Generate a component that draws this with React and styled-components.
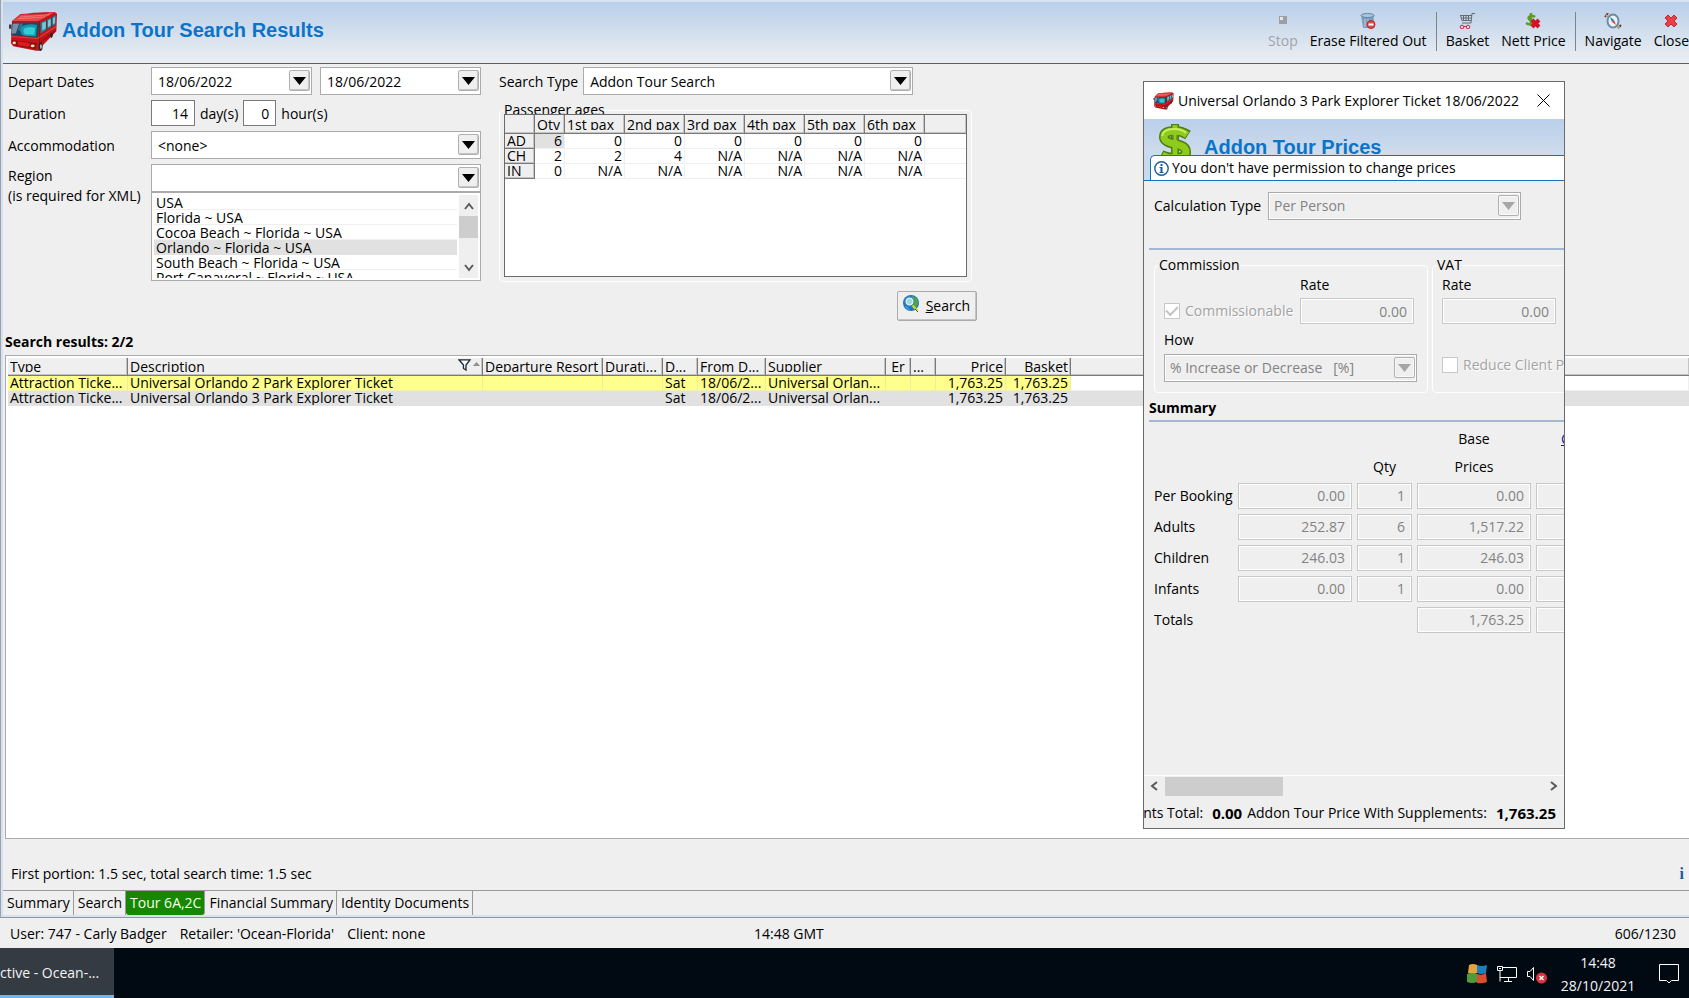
import styled, { createGlobalStyle } from 'styled-components'

const GlobalStyle = createGlobalStyle`
    * {
        box-sizing: border-box;
    }
    body {
        margin: 0;
        background: #efefef;
        color: #000000;
        font-family: 'Open Sans', 'Noto Sans', sans-serif;
        font-size: 14px;
        line-height: 20px;
    }
    button, input, select {
        font: inherit;
        color: inherit;
        margin: 0;
        border-radius: 0;
    }
`

const Desktop = styled.div`
    position: relative;
    display: flex;
    flex-direction: column;
    min-height: 100vh;
    overflow: hidden;
    white-space: nowrap;
`

const Frame = styled.main`
    flex: 1;
    display: flex;
    flex-direction: column;
    border-left: 1px solid #9aa3ad;
    border-bottom: 1px solid #8f979f;
    box-shadow: inset 2px 2px 0 #d6e2f0, inset 0 -2px 0 #d6e2f0;
    padding: 2px 0 2px 2px;
    overflow: hidden;
`

/* ---------- header ---------- */

const Header = styled.header`
    display: flex;
    align-items: center;
    height: 62px;
    padding: 0 0 2px 5px;
    background: linear-gradient(#b9cfea, #eceff1);
    border-bottom: 1px solid #1a70a8;
    overflow: hidden;
    h1 {
        flex: 1;
        margin: 0 0 0 4px;
        padding-bottom: 4px;
    }
`

const Title = styled.h1`
    color: #0b74c9;
    font-family: 'Liberation Sans', Arial, sans-serif;
    font-size: 20px;
    line-height: 24px;
    font-weight: bold;
`

const Toolbar = styled.div`
    display: flex;
    flex: none;
    align-items: center;
    margin-right: -6px;
`

const ToolButton = styled.button`
    display: flex;
    flex-direction: column;
    align-items: center;
    gap: 2px;
    padding: 0 6px;
    border: 0;
    background: none;
    &:disabled {
        color: #a0a4aa;
    }
`

const Separator = styled.span`
    width: 1px;
    height: 39px;
    margin: 0 3px;
    background: #7c848e;
`

/* ---------- form controls ---------- */

const Field = styled.span`
    position: relative;
    display: flex;
    height: 28px;
    width: ${(props) => props.$width || '100%'};
    flex: none;
    border: 1px solid #ababab;
    background: #ffffff;
    input, select {
        flex: 1;
        min-width: 0;
        width: 100%;
        padding: 2px 28px 0 6px;
        border: 0;
        background: none;
        appearance: none;
        outline: 0;
        opacity: 1;
    }
    select:disabled {
        background: #efefef;
        border: 1px solid #ffffff;
        color: #838383;
        padding: 0 28px 0 4px;
    }
`

const Arrow = styled.span`
    position: absolute;
    top: 2px;
    right: 1px;
    display: grid;
    place-items: center;
    width: 21px;
    height: 21px;
    border: 1px solid #b0b0b0;
    border-radius: 2px;
    background: #efefef;
    color: ${(props) => (props.$off ? '#a6a6a6' : '#000000')};
    box-shadow: ${(props) => (props.$off ? 'inset 0 0 0 1px #f8f8f8' : 'inset -1px -1px 0 #c4c4c4')};
    pointer-events: none;
`

const NumberBox = styled.input`
    width: ${(props) => props.$width || '100%'};
    height: 26px;
    padding: 0 6px;
    border: 1px solid #7a7a7a;
    background: #ffffff;
    text-align: right;
    &:disabled {
        border-color: #c8c8c8;
        background: #efefef;
        box-shadow: inset 0 0 0 1px #ffffff;
        color: #838383;
    }
`

const Form = styled.section`
    display: flex;
    gap: 18px;
    padding: 3px 0 0 5px;
    label {
        padding-top: 2px;
    }
`

const Criteria = styled.div`
    display: grid;
    grid-template-columns: 143px 330px;
    row-gap: 5px;
    align-content: start;
    align-items: center;
`

const Inline = styled.div`
    display: flex;
    align-items: center;
    gap: ${(props) => props.$gap || '5px'};
`

const RegionLabel = styled.label`
    align-self: start;
`

const ListBox = styled.div`
    display: flex;
    height: 89px;
    padding: 2px;
    border: 1px solid #ababab;
    background: #ffffff;
    ul {
        flex: 1;
        height: 83px;
        margin: 0;
        padding: 0;
        list-style: none;
        overflow: hidden;
    }
    li {
        height: 15px;
        margin-right: 2px;
        padding-left: 2px;
        line-height: 16px;
        border-bottom: 1px solid #efefef;
    }
    li[aria-selected='true'] {
        background: #e1e1e1;
        border-color: #e1e1e1;
    }
`

const ScrollColumn = styled.div`
    display: flex;
    flex-direction: column;
    width: 19px;
    background: #efefef;
    svg {
        flex: none;
        margin: auto;
    }
    i {
        height: 22px;
        background: #cdcdcd;
    }
    span {
        display: flex;
        height: 21px;
    }
    span:last-child {
        margin-top: auto;
    }
`

const SearchSide = styled.div`
    display: flex;
    flex-direction: column;
    width: 478px;
`

const Passengers = styled.fieldset`
    width: 473px;
    margin: 5px 0 0;
    padding: 0 4px 4px;
    border: 1px solid #ffffff;
    border-radius: 4px;
    legend {
        padding: 0;
        line-height: 20px;
    }
`

const PaxGrid = styled.div`
    position: relative;
    height: 163px;
    margin-top: -6px;
    border: 1px solid #6a6a6a;
    background: #ffffff;
    table {
        width: 100%;
        table-layout: fixed;
        border-collapse: separate;
        border-spacing: 0;
    }
    th, td {
        height: 15px;
        padding: 0 2px;
        font-weight: normal;
        line-height: 14px;
        text-align: right;
        border-right: 1px solid #efefef;
        border-bottom: 1px solid #efefef;
        overflow: hidden;
    }
    th {
        background: #efefef;
        text-align: left;
        border-color: #7a7a7a;
        box-shadow: inset -1px -1px 0 #c4c4c4;
    }
    thead th {
        height: 19px;
        padding: 2px 2px 3px;
    }
    tbody tr:first-child td:nth-child(2) {
        background: #e1e1e1;
    }
    td:last-child, th:last-child {
        border-right: 0;
    }
`

// Texte d'en-tête coupé juste sous la ligne de base
const HeadText = styled.span`
    display: block;
    height: 13px;
    line-height: 15px;
    overflow: hidden;
`

const SearchButton = styled.button`
    display: flex;
    align-items: center;
    align-self: flex-end;
    gap: 6px;
    height: 30px;
    margin-top: 9px;
    padding: 0 6px 0 5px;
    border: 1px solid #ababab;
    border-radius: 2px;
    background: #efefef;
    box-shadow: inset -1px -1px 0 #c4c4c4;
    svg {
        margin-bottom: 5px;
    }
`

/* ---------- results ---------- */

const ResultsTitle = styled.h2`
    margin: 11px 0 3px 2px;
    font-size: 14px;
    line-height: 20px;
    font-weight: bold;
`

const Results = styled.section`
    flex: 1;
    margin-left: 2px;
    padding: 2px 0 0 2px;
    border: 1px solid #ababab;
    border-right: 0;
    background: #ffffff;
    table {
        width: 100%;
        table-layout: fixed;
        border-collapse: separate;
        border-spacing: 0;
    }
    th, td {
        padding: 0 2px;
        font-weight: normal;
        text-align: left;
        overflow: hidden;
    }
    th {
        height: 18px;
        padding: 1px 2px 3px;
        background: #efefef;
        border-right: 1px solid #7a7a7a;
        border-bottom: 1px solid #7a7a7a;
        box-shadow: inset -1px -1px 0 #c4c4c4;
    }
    td {
        height: 15px;
        line-height: 14px;
        border-right: 1px solid #efef9a;
        border-bottom: 1px solid #efefc0;
        background: #ffff8c;
    }
    tr[aria-selected='true'] td {
        background: #e1e1e1;
        border-color: #e1e1e1;
    }
    tr[aria-selected='false'] td:last-child {
        background: #ffffff;
        border-color: #efefef;
    }
    th:last-child {
        border-right: 0;
    }
    .right {
        text-align: right;
    }
    .center {
        text-align: center;
    }
    .sorted {
        display: flex;
        justify-content: space-between;
        align-items: flex-start;
    }
`

const Timing = styled.footer`
    display: flex;
    justify-content: space-between;
    padding: 25px 5px 6px 8px;
    b {
        color: #1b5c9e;
        font-family: 'Liberation Serif', serif;
        font-size: 16px;
    }
`

const Tabs = styled.nav`
    display: flex;
    height: 25px;
    border-top: 1px solid #9a9a9a;
`

const Tab = styled.button`
    padding: 0 3px 0 4px;
    border: 0;
    border-right: 1px solid #9a9a9a;
    background: ${(props) => (props.$active ? '#178700' : 'none')};
    color: ${(props) => (props.$active ? '#f2fff0' : '#000000')};
    border-radius: ${(props) => (props.$active ? '0 0 3px 3px' : '0')};
`

const StatusBar = styled.div`
    display: grid;
    grid-template-columns: 754px 1fr auto;
    align-items: center;
    height: 30px;
    padding: 2px 13px 0 0;
    span {
        padding-left: 10px;
    }
`

/* ---------- taskbar ---------- */

const Taskbar = styled.div`
    display: flex;
    justify-content: space-between;
    height: 50px;
    background: #010912;
    color: #f4f4f4;
`

const Task = styled.button`
    width: 114px;
    padding: 2px 0 0;
    border: 0;
    border-bottom: 3px solid #76b4e6;
    background: #343b43;
    text-align: left;
    overflow: hidden;
`

const Tray = styled.div`
    display: flex;
    align-items: center;
    gap: 10px;
    padding: 1px 10px 0 0;
    time {
        width: 78px;
        margin: 0 12px 0 2px;
        text-align: center;
        line-height: 23px;
    }
`

/* ---------- price dialog ---------- */

const Dialog = styled.section`
    position: absolute;
    top: 81px;
    right: 124px;
    bottom: 169px;
    width: 422px;
    display: flex;
    flex-direction: column;
    border: 1px solid #6a6a6a;
    background: #efefef;
    overflow: hidden;
`

const DialogTitle = styled.div`
    display: flex;
    flex: none;
    align-items: center;
    gap: 4px;
    height: 37px;
    padding: 0 14px 0 9px;
    background: #ffffff;
    button {
        display: flex;
        margin-left: auto;
        padding: 0;
        border: 0;
        background: none;
    }
`

const DialogHeader = styled.div`
    display: flex;
    flex: none;
    gap: 11px;
    height: 36px;
    padding: 4px 0 0 13px;
    background: linear-gradient(#b9cfea, #cfdcec);
    overflow: hidden;
    svg {
        flex: none;
    }
    h2 {
        margin: 12px 0 0;
    }
`

const Notice = styled.div`
    flex: none;
    padding-left: 6px;
    border-bottom: 1px solid #1a70b8;
    background: #c8daee;
    p {
        display: flex;
        align-items: center;
        gap: 3px;
        height: 25px;
        margin: 0;
        padding-left: 3px;
        border: solid #1a70b8;
        border-width: 1px 0 0 1px;
        border-top-left-radius: 5px;
        background: #ffffff;
    }
`

const DialogBody = styled.div`
    flex: 1;
    padding: 6px 0 0 5px;
    overflow: hidden;
`

const Calculation = styled.div`
    display: flex;
    align-items: center;
    gap: 7px;
    padding: 5px 0 28px 5px;
`

const Rule = styled.hr`
    height: 2px;
    margin: 0;
    border: 0;
    background: #a3b8d0;
`

const Groups = styled.div`
    display: flex;
    gap: 4px;
    padding: 5px 0 0 5px;
`

const Group = styled.fieldset`
    flex: none;
    width: ${(props) => props.$width};
    height: 138px;
    min-width: 0;
    margin: 0;
    padding: 0 0 0 9px;
    border: 1px solid #ffffff;
    border-radius: 4px;
    legend {
        margin-left: -5px;
        padding: 0;
        line-height: 20px;
    }
`

const RateLabel = styled.label`
    display: block;
    margin: 0 0 4px ${(props) => props.$indent || '0'};
    line-height: 19px;
`

const Check = styled.label`
    display: flex;
    align-items: center;
    gap: 5px;
    width: ${(props) => props.$width || 'auto'};
    color: #a3a3a3;
    text-shadow: 1px 1px 0 #ffffff;
    input {
        display: grid;
        flex: none;
        place-items: center;
        width: 16px;
        height: 16px;
        border: 1px solid #c8c8c8;
        background: #ffffff;
        appearance: none;
    }
    input:checked::after {
        content: '';
        width: 10px;
        height: 5px;
        margin-bottom: 4px;
        border: solid #c4c4c4;
        border-width: 0 0 2px 2px;
        transform: rotate(-45deg);
    }
`

const HowLabel = styled.label`
    display: block;
    margin: 6px 0 4px;
`

const VatCheck = styled.div`
    margin-top: 31px;
`

const SummaryTitle = styled.h3`
    margin: 5px 0 2px;
    font-size: 14px;
    line-height: 20px;
`

const Summary = styled.table`
    width: 501px;
    margin-left: 5px;
    table-layout: fixed;
    border-collapse: collapse;
    th {
        padding: 0;
        font-weight: normal;
        text-align: left;
    }
    td {
        height: 31px;
        padding: 0 5px 0 0;
    }
    thead th {
        height: 27px;
        padding-right: 5px;
        text-align: center;
    }
    thead tr:first-child th {
        height: 31px;
        padding-top: 3px;
    }
    input {
        display: block;
    }
    .linked {
        padding-left: 25px;
        text-align: left;
    }
    a {
        color: #1a1a8c;
    }
`

const ScrollRow = styled.div`
    display: flex;
    flex: none;
    align-items: center;
    height: 21px;
    padding: 0 6px;
    border-top: 1px solid #ffffff;
    i {
        width: 118px;
        height: 19px;
        margin: 0 auto 0 7px;
        background: #cdcdcd;
    }
`

const Totals = styled.div`
    display: flex;
    flex: none;
    justify-content: flex-end;
    height: 32px;
    padding: 7px 8px 0 0;
    overflow: hidden;
    b {
        margin: 0 5px 0 9px;
        font-size: 15px;
    }
    b:last-child {
        margin-right: 0;
    }
`

/* ---------- icons ---------- */

const Bus = ({ width, height }) => (
    <svg width={width} height={height} viewBox="24 32 152 122" preserveAspectRatio="none" aria-hidden="true">
        <path d="M36 62L62 41L166 35L173 40L171 92L158 106L130 134L122 150L110 150L40 137L33 128Z" fill="#c4141a" />
        <path d="M37 62L63 43L166 36L120 60L110 62Z" fill="#e5494a" />
        <path d="M78 43L100 37L150 36L140 42Z" fill="#b81f28" />
        <path d="M62 50L150 43M56 55L135 50" stroke="#f28880" strokeWidth="2" />
        <path d="M37 67L118 66L113 110L34 104Z" fill="#174a66" />
        <path d="M64 78Q88 68 112 74L109 108L72 106Q56 98 64 78Z" fill="#1496ab" />
        <path d="M72 84Q90 76 106 82L104 103L78 102Q68 96 72 84Z" fill="#34cbd2" />
        <path d="M38 70L58 69L48 98L36 100Z" fill="#7690a6" />
        <path d="M60 69L70 69L60 90L54 90Z" fill="#3d6f90" />
        <path d="M123 66L170 45L168 72L123 99Z" fill="#1f7f96" />
        <path d="M128 68L139 63V84L128 90ZM145 60L154 56V76L145 80ZM160 53L167 50V68L160 72Z" fill="#74cbd6" />
        <path d="M120 62V146M142 58V88M157 50V80" stroke="#86141c" strokeWidth="3" />
        <path d="M34 108L113 114L170 78" fill="none" stroke="#e0423f" strokeWidth="3" />
        <path d="M36 118L112 127L108 146L40 134Z" fill="#8f0c12" />
        <path d="M54 122L90 127V139L54 134Z" fill="#dd1b1f" />
        <path d="M124 120L168 88V94L124 128Z" fill="#a31016" />
        <ellipse cx="43" cy="127" rx="5" ry="4" fill="#ffe3b0" />
        <ellipse cx="99" cy="136" rx="6" ry="4" fill="#ffe3b0" />
        <ellipse cx="123" cy="138" rx="6" ry="13" fill="#26262a" />
        <ellipse cx="124" cy="138" rx="3" ry="7" fill="#b9b9bd" />
        <ellipse cx="156" cy="104" rx="4" ry="8" fill="#26262a" />
        <path d="M27 72h8v13h-8zM117 76h5v14h-5z" fill="#3b3f4a" />
    </svg>
)

const Dollar = () => (
    <svg width="36" height="40" viewBox="0 0 36 40" fill="none" aria-hidden="true">
        <g stroke="#4e7d12" strokeWidth="10" strokeLinejoin="round">
            <path d="M31 12Q25 8 18 8Q7 8 7 14Q7 19 18 21Q29 23 29 29Q29 35 18 35Q10 35 4 32" />
            <path d="M18 1v38" strokeWidth="8" />
        </g>
        <g stroke="#8fcb1c" strokeWidth="7">
            <path d="M30 12Q25 8 18 8Q7 8 7 14Q7 19 18 21Q29 23 29 29Q29 35 18 35Q10 35 5 32" />
            <path d="M18 2v37" strokeWidth="5" />
        </g>
        <path d="M5 13Q6 6 17 6Q25 6 29 10" stroke="#c8ec62" strokeWidth="2" />
        <path d="M16 12v5M20 12v5" stroke="#4e7d12" />
    </svg>
)

const StopIcon = () => (
    <svg width="16" height="16" viewBox="0 0 16 16" aria-hidden="true">
        <path d="M4 3h8v8H4z" fill="#9b9ea3" />
        <path d="M5 4h3v3H5z" fill="#e3e6ea" />
    </svg>
)

const EraseIcon = () => (
    <svg width="16" height="16" viewBox="0 0 16 16" aria-hidden="true">
        <path d="M1 2h13l-1 13H3z" fill="#7d9fbd" />
        <ellipse cx="7.500" cy="2.500" rx="6.500" ry="2" fill="#a9c6dc" stroke="#5f87a8" />
        <path d="M5 6v8M8 6v8" stroke="#b7cddd" />
        <circle cx="11" cy="11.500" r="4" fill="#e04a4a" stroke="#b52525" />
        <path d="M8.500 11.500h5" stroke="#ffffff" strokeWidth="2" />
    </svg>
)

const BasketIcon = () => (
    <svg width="16" height="16" viewBox="0 0 16 16" fill="none" aria-hidden="true">
        <path d="M16 .5h-3L12 10H3M1 2.500h12M1.500 2.500L3 7.500h9M4.500 3v4M7 3v4M9.500 3v4M2 5h10" stroke="#666b72" />
        <circle cx="3" cy="14" r="1.800" stroke="#d12b38" />
        <circle cx="9" cy="14" r="1.800" stroke="#d12b38" />
        <path d="M5 13.500h2.500" stroke="#d12b38" />
    </svg>
)

const NettIcon = () => (
    <svg width="16" height="16" viewBox="0 0 16 16" fill="none" aria-hidden="true">
        <path d="M10 4Q8 2 5 3Q2 5 5 7L8 8Q10 10 7 11Q4 12 1 10M6 0v13" stroke="#5c9c22" strokeWidth="2.500" />
        <path d="M7 7l7 7M14 7l-7 7" stroke="#d80f24" strokeWidth="4" />
    </svg>
)

const CompassIcon = () => (
    <svg width="18" height="16" viewBox="0 0 18 16" fill="none" aria-hidden="true">
        <path d="M1 4l3-4M14 15l3-3" stroke="#5a4636" strokeWidth="2" />
        <path d="M2 2l4 3M12 12l4 3" stroke="#d0a070" strokeWidth="2" />
        <ellipse cx="9" cy="8" rx="5.500" ry="6.500" fill="#e8f4fb" stroke="#6e8ba3" strokeWidth="2" />
        <path d="M6 4l4 3-2 2z" fill="#1479c9" />
        <path d="M12 12l-4-3 2-2z" fill="#e0402e" />
    </svg>
)

const CloseIcon = () => (
    <svg width="16" height="16" viewBox="0 0 16 16" aria-hidden="true">
        <path
            d="M2 5l3-3 3 3 3-3 3 3-3 3 3 3-3 3-3-3-3 3-3-3 3-3z"
            fill="#ea3f49"
            stroke="#bc2a35"
        />
    </svg>
)

const GlobeIcon = () => (
    <svg width="17" height="17" viewBox="0 0 17 17" fill="none" aria-hidden="true">
        <circle cx="8" cy="8" r="8" fill="#2273c4" />
        <path d="M9 1q7 2 6 8l-4 6-3-5z" fill="#4fa83d" />
        <path d="M2 11q3 0 5 4-4 0-5-4z" fill="#38a0d8" />
        <circle cx="6.500" cy="6.500" r="3.500" fill="#9fd8ea" stroke="#d8eef7" strokeWidth="1.500" />
        <circle cx="6.500" cy="6.500" r="4.700" stroke="#3f86b5" />
        <path d="M9.500 10.500l5 5" stroke="#d8d23a" strokeWidth="2" />
        <path d="M12 14l3 3" stroke="#51521f" />
    </svg>
)

const InfoIcon = () => (
    <svg width="15" height="15" viewBox="0 0 15 15" fill="none" aria-hidden="true">
        <circle cx="7.500" cy="7.500" r="6.700" stroke="#1b5c9e" strokeWidth="1.400" />
        <path d="M6.500 3h2v2h-2zM5.500 6h3v5h1v1h-4v-1h1V7h-1z" fill="#1b5c9e" />
    </svg>
)

const Chevron = ({ d, width, height }) => (
    <svg width={width} height={height} viewBox={`0 0 ${width} ${height}`} fill="none" aria-hidden="true">
        <path d={d} stroke="#5a5a5a" strokeWidth="2" />
    </svg>
)

const Triangle = () => (
    <svg width="13" height="8" viewBox="0 0 13 8" aria-hidden="true">
        <path d="M0 0h13L6.500 8z" fill="currentColor" />
    </svg>
)

const FilterIcon = () => (
    <svg width="22" height="12" viewBox="0 0 22 12" aria-hidden="true">
        <path d="M1 .8h11L8 6v5L5.500 9.500V6z" fill="#ffffff" stroke="#1d2430" strokeWidth="1.300" />
        <path d="M15 7l3.500-4L22 7z" fill="#8d8d8d" />
    </svg>
)

const ShieldIcon = () => (
    <svg width="20" height="20" viewBox="0 0 20 20" aria-hidden="true">
        <path d="M2 1q4-2 8 0v8q-4 2-9 0z" fill="#e8a23a" />
        <path d="M10 1q5 2 10 0l-1 8q-5 2-9 0z" fill="#1f7fb8" />
        <path d="M0 10q5-2 10 0v8q-5 2-10 0z" fill="#4f9a3c" />
        <path d="M10 10q5 2 9-1l1 9q-5 2-10 1z" fill="#d8502c" />
    </svg>
)

const NetworkIcon = () => (
    <svg width="20" height="18" viewBox="0 0 20 18" fill="none" stroke="#ffffff" aria-hidden="true">
        <path d="M6 2.500h13.500v10H3M11.500 13v3M7 16.500h8M.5 1.500h5v4h-5zM3 5.500v11M2 3.500h2" />
    </svg>
)

const MutedIcon = () => (
    <svg width="20" height="20" viewBox="0 0 20 20" fill="none" aria-hidden="true">
        <path d="M.5 7.500h2.500L6.500 3.500v13L3 12.500H.5z" stroke="#ffffff" />
        <circle cx="14.500" cy="14" r="5.500" fill="#d8323c" />
        <path d="M12.500 12l4 4M16.500 12l-4 4" stroke="#ffffff" strokeWidth="1.500" />
    </svg>
)

const NoteIcon = () => (
    <svg width="20" height="20" viewBox="0 0 20 20" fill="none" stroke="#ffffff" aria-hidden="true">
        <path d="M.5.5h19v16h-7l-2.500 2.500-2.500-2.500h-7z" />
    </svg>
)

/* ---------- data ---------- */

const regions = [
    'USA',
    'Florida ~ USA',
    'Cocoa Beach ~ Florida ~ USA',
    'Orlando ~ Florida ~ USA',
    'South Beach ~ Florida ~ USA',
    'Port Canaveral ~ Florida ~ USA',
]

const paxHead = ['', 'Qty', '1st pax', '2nd pax', '3rd pax', '4th pax', '5th pax', '6th pax', '']
const paxWidths = [30, 30, 60, 60, 60, 60, 60, 60]
const paxRows = [
    ['AD', '6', '0', '0', '0', '0', '0', '0'],
    ['CH', '2', '2', '4', 'N/A', 'N/A', 'N/A', 'N/A'],
    ['IN', '0', 'N/A', 'N/A', 'N/A', 'N/A', 'N/A', 'N/A'],
]

const columns = [
    { name: 'Type', width: 120 },
    { name: 'Description', width: 355, align: 'sorted' },
    { name: 'Departure Resort', width: 120 },
    { name: 'Durati...', width: 60 },
    { name: 'D...', width: 35 },
    { name: 'From D...', width: 68 },
    { name: 'Supplier', width: 120 },
    { name: 'Er', width: 25, align: 'center' },
    { name: '...', width: 25 },
    { name: 'Price', width: 70, align: 'right' },
    { name: 'Basket', width: 65, align: 'right' },
]

const tours = [2, 3].map((parks) => [
    'Attraction Ticke...',
    `Universal Orlando ${parks} Park Explorer Ticket`,
    '',
    '',
    'Sat',
    '18/06/2...',
    'Universal Orlan...',
    '',
    '',
    '1,763.25',
    '1,763.25',
])

const prices = [
    { name: 'Per Booking', price: '0.00', qty: '1', base: '0.00' },
    { name: 'Adults', price: '252.87', qty: '6', base: '1,517.22' },
    { name: 'Children', price: '246.03', qty: '1', base: '246.03' },
    { name: 'Infants', price: '0.00', qty: '1', base: '0.00' },
    { name: 'Totals', base: '1,763.25' },
]

/* ---------- components ---------- */

function Combo({ id, value, width, disabled, label, date }) {
    return (
        <Field $width={width}>
            {date ? (
                <input id={id} aria-label={label} defaultValue={value} />
            ) : (
                <select id={id} aria-label={label} disabled={disabled}>
                    <option>{value}</option>
                </select>
            )}
            <Arrow $off={disabled}>
                <Triangle />
            </Arrow>
        </Field>
    )
}

function Tool({ icon, name, disabled }) {
    return (
        <ToolButton disabled={disabled}>
            {icon}
            {name}
        </ToolButton>
    )
}

function SearchForm() {
    return (
        <Form>
            <Criteria>
                <label htmlFor="from">Depart Dates</label>
                <Inline $gap="8px">
                    <Combo id="from" value="18/06/2022" width="161px" date />
                    <Combo label="Depart to" value="18/06/2022" width="161px" date />
                </Inline>
                <label htmlFor="days">Duration</label>
                <Inline>
                    <NumberBox id="days" $width="44px" defaultValue="14" />
                    <label htmlFor="days">day(s)</label>
                    <NumberBox id="hours" $width="33px" defaultValue="0" />
                    <label htmlFor="hours">hour(s)</label>
                </Inline>
                <label htmlFor="accommodation">Accommodation</label>
                <Combo id="accommodation" value="<none>" />
                <RegionLabel htmlFor="region">
                    Region
                    <br />
                    (is required for XML)
                </RegionLabel>
                <div>
                    <Combo id="region" value="" />
                    <ListBox>
                        <ul role="listbox" aria-label="Regions">
                            {regions.map((region) => (
                                <li key={region} role="option" aria-selected={region.startsWith('Orlando')}>
                                    {region}
                                </li>
                            ))}
                        </ul>
                        <ScrollColumn>
                            <span><Chevron d="M1 7l4-5 4 5" width={10} height={8} /></span>
                            <i />
                            <span><Chevron d="M1 1l4 5 4-5" width={10} height={8} /></span>
                        </ScrollColumn>
                    </ListBox>
                </div>
            </Criteria>
            <SearchSide>
                <Inline>
                    <label htmlFor="searchType">Search Type</label>
                    <Combo id="searchType" value="Addon Tour Search" width="330px" />
                </Inline>
                <Passengers>
                    <legend>Passenger ages</legend>
                    <PaxGrid>
                        <table>
                            <colgroup>
                                {paxWidths.map((width, i) => <col key={i} width={width} />)}
                                <col />
                            </colgroup>
                            <thead>
                                <tr>
                                    {paxHead.map((name, i) => (
                                        <th key={i}><HeadText>{name}</HeadText></th>
                                    ))}
                                </tr>
                            </thead>
                            <tbody>
                                {paxRows.map(([name, ...cells]) => (
                                    <tr key={name}>
                                        <th>{name}</th>
                                        {cells.map((cell, i) => <td key={i}>{cell}</td>)}
                                        <td />
                                    </tr>
                                ))}
                            </tbody>
                        </table>
                    </PaxGrid>
                </Passengers>
                <SearchButton>
                    <GlobeIcon />
                    <span><u>S</u>earch</span>
                </SearchButton>
            </SearchSide>
        </Form>
    )
}

function ResultsTable() {
    return (
        <Results>
            <table>
                <colgroup>
                    {columns.map((column) => <col key={column.name} width={column.width} />)}
                    <col />
                </colgroup>
                <thead>
                    <tr>
                        {columns.map((column) => (
                            <th key={column.name}>
                                <HeadText className={column.align}>
                                    {column.name}
                                    {column.align === 'sorted' && <FilterIcon />}
                                </HeadText>
                            </th>
                        ))}
                        <th />
                    </tr>
                </thead>
                <tbody>
                    {tours.map((cells, row) => (
                        <tr key={row} aria-selected={row === 1}>
                            {cells.map((cell, i) => (
                                <td key={i} className={columns[i].align === 'right' ? 'right' : ''}>{cell}</td>
                            ))}
                            <td />
                        </tr>
                    ))}
                </tbody>
            </table>
        </Results>
    )
}

function PriceDialog() {
    return (
        <Dialog role="dialog" aria-label="Addon Tour Prices">
            <DialogTitle>
                <Bus width={21} height={18} />
                Universal Orlando 3 Park Explorer Ticket 18/06/2022
                <button aria-label="Close window">
                    <svg width="13" height="13" viewBox="0 0 13 13" stroke="#000000">
                        <path d="M.5.5l12 12M12.500.5l-12 12" />
                    </svg>
                </button>
            </DialogTitle>
            <DialogHeader>
                <Dollar />
                <Title as="h2">Addon Tour Prices</Title>
            </DialogHeader>
            <Notice>
                <p><InfoIcon />You don't have permission to change prices</p>
            </Notice>
            <DialogBody>
                <Calculation>
                    <label htmlFor="calculation">Calculation Type</label>
                    <Combo id="calculation" value="Per Person" width="253px" disabled />
                </Calculation>
                <Rule />
                <Groups>
                    <Group $width="274px">
                        <legend>Commission</legend>
                        <RateLabel htmlFor="commission" $indent="136px">Rate</RateLabel>
                        <Inline $gap="0px">
                            <Check $width="136px">
                                <input type="checkbox" defaultChecked disabled />
                                Commissionable
                            </Check>
                            <NumberBox id="commission" $width="114px" defaultValue="0.00" disabled />
                        </Inline>
                        <HowLabel htmlFor="how">How</HowLabel>
                        <Combo id="how" value={'% Increase or Decrease \u00a0 [%]'} width="253px" disabled />
                    </Group>
                    <Group $width="280px">
                        <legend>VAT</legend>
                        <RateLabel htmlFor="vat">Rate</RateLabel>
                        <NumberBox id="vat" $width="114px" defaultValue="0.00" disabled />
                        <VatCheck>
                            <Check>
                                <input type="checkbox" disabled />
                                Reduce Client P
                            </Check>
                        </VatCheck>
                    </Group>
                </Groups>
                <SummaryTitle>Summary</SummaryTitle>
                <Rule />
                <Summary>
                    <colgroup>
                        <col width="84" />
                        <col width="119" />
                        <col width="60" />
                        <col width="119" />
                        <col width="119" />
                    </colgroup>
                    <thead>
                        <tr>
                            <th /><th /><th />
                            <th>Base</th>
                            <th className="linked"><a href="#c">C</a></th>
                        </tr>
                        <tr>
                            <th /><th />
                            <th>Qty</th>
                            <th>Prices</th>
                            <th />
                        </tr>
                    </thead>
                    <tbody>
                        {prices.map(({ name, price, qty, base }) => (
                            <tr key={name}>
                                <th>{name}</th>
                                <td>{price && <NumberBox aria-label={`${name} price`} defaultValue={price} disabled />}</td>
                                <td>{qty && <NumberBox aria-label={`${name} quantity`} defaultValue={qty} disabled />}</td>
                                <td><NumberBox aria-label={`${name} base price`} defaultValue={base} disabled /></td>
                                <td><NumberBox aria-label={`${name} other price`} disabled /></td>
                            </tr>
                        ))}
                    </tbody>
                </Summary>
            </DialogBody>
            <ScrollRow>
                <Chevron d="M7 1L2 5l5 4" width={8} height={10} />
                <i />
                <Chevron d="M1 1l5 4-5 4" width={8} height={10} />
            </ScrollRow>
            <Totals>
                nts Total: <b>0.00</b> Addon Tour Price With Supplements: <b>1,763.25</b>
            </Totals>
        </Dialog>
    )
}

export default function App() {
    return (
        <Desktop>
            <GlobalStyle />
            <Frame>
                <Header>
                    <Bus width={50} height={41} />
                    <Title>Addon Tour Search Results</Title>
                    <Toolbar>
                        <Tool icon={<StopIcon />} name="Stop" disabled />
                        <Tool icon={<EraseIcon />} name="Erase Filtered Out" />
                        <Separator />
                        <Tool icon={<BasketIcon />} name="Basket" />
                        <Tool icon={<NettIcon />} name="Nett Price" />
                        <Separator />
                        <Tool icon={<CompassIcon />} name="Navigate" />
                        <Tool icon={<CloseIcon />} name="Close" />
                    </Toolbar>
                </Header>
                <SearchForm />
                <ResultsTitle>Search results: 2/2</ResultsTitle>
                <ResultsTable />
                <Timing>
                    First portion: 1.5 sec, total search time: 1.5 sec
                    <b>i</b>
                </Timing>
                <Tabs>
                    <Tab>Summary</Tab>
                    <Tab>Search</Tab>
                    <Tab $active>Tour 6A,2C</Tab>
                    <Tab>Financial Summary</Tab>
                    <Tab>Identity Documents</Tab>
                </Tabs>
            </Frame>
            <StatusBar>
                <Inline $gap="3px">
                    <span>User: 747 - Carly Badger</span>
                    <span>Retailer: 'Ocean-Florida'</span>
                    <span>Client: none</span>
                </Inline>
                <time>14:48 GMT</time>
                <span>606/1230</span>
            </StatusBar>
            <Taskbar>
                <Task>ctive - Ocean-...</Task>
                <Tray>
                    <ShieldIcon />
                    <NetworkIcon />
                    <MutedIcon />
                    <time>
                        14:48
                        <br />
                        28/10/2021
                    </time>
                    <NoteIcon />
                </Tray>
            </Taskbar>
            <PriceDialog />
        </Desktop>
    )
}
